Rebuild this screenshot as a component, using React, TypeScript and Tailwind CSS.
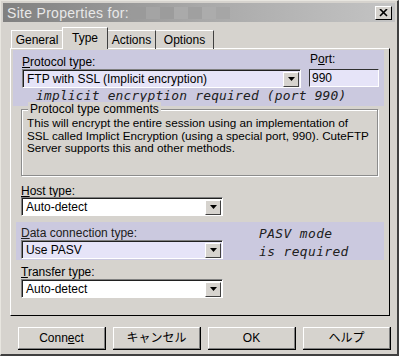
import React from "react";

const ui = { fontFamily: '"Liberation Sans", "Noto Sans CJK JP", sans-serif' };
const mono = { fontFamily: '"DejaVu Sans Mono", monospace' };

function Arrow() {
  return (
    <div className="w-[16px] h-[15px] bg-[#d6d3ce] border-t border-l border-t-[#ffffff] border-l-[#ffffff] border-b border-r border-b-[#404040] border-r-[#404040] flex items-center justify-center shrink-0">
      <svg width="7" height="4" viewBox="0 0 7 4">
        <polygon points="0,0 7,0 3.5,4" fill="#000" />
      </svg>
    </div>
  );
}

function Combo({ text, w, bg = "bg-white" }: { text: string; w: string; bg?: string }) {
  return (
    <div className={`${w} h-[19px] flex border-t border-l border-t-[#808080] border-l-[#808080] border-b border-r border-b-white border-r-white`}>
      <div className={`flex-1 flex items-center border-t border-l border-t-[#202020] border-l-[#202020] ${bg} pl-[3px] pr-[1px]`}>
        <span className="flex-1 text-[12px] text-black leading-none whitespace-nowrap">{text}</span>
        <Arrow />
      </div>
    </div>
  );
}

function Btn({ label, children }: { label?: string; children?: React.ReactNode }) {
  return (
    <div className="w-[88px] h-[23px] border-r border-b border-r-black border-b-black">
      <div className="w-full h-full border-t border-l border-t-white border-l-white border-r border-b border-r-[#808080] border-b-[#808080] flex items-center justify-center text-[12px] leading-none text-black">
        {children ?? label}
      </div>
    </div>
  );
}

export default function App() {
  return (
    <div className="w-[399px] h-[356px] bg-[#d6d3ce] border-t border-l border-t-[#e8e6e0] border-l-[#e8e6e0] border-r-2 border-b-2 border-r-[#404040] border-b-[#404040] overflow-hidden flex flex-col text-[12px] leading-[14px]" style={ui}>
      {/* title bar */}
      <div className="mx-[2px] mt-[2px] h-[19px] shrink-0 flex items-center bg-gradient-to-r from-[#808080] via-[#a8a8a8] to-[#c4c4c4] pl-[4px] pr-[3px]">
        <span className="text-[14px] leading-none text-[#e8e8e8] tracking-[0.3px]">Site Properties for:</span>
        <div className="ml-[3px] flex">
          <div className="w-[14px] h-[12px] bg-[#9a9a9a]" />
          <div className="w-[14px] h-[12px] bg-[#a4a4a4]" />
          <div className="w-[14px] h-[12px] bg-[#9c9c9c]" />
          <div className="w-[14px] h-[12px] bg-[#aaaaaa]" />
          <div className="w-[14px] h-[12px] bg-[#a0a0a0]" />
          <div className="w-[14px] h-[12px] bg-[#acacac]" />
          <div className="w-[14px] h-[12px] bg-[#a6a6a6]" />
        </div>
        <div className="flex-1" />
        <div className="w-[17px] h-[14px] bg-[#d6d3ce] border-t border-l border-t-white border-l-white border-r border-b border-r-black border-b-black flex items-center justify-center">
          <svg width="9" height="8" viewBox="0 0 9 8">
            <path d="M1 0 L8 7 M8 0 L1 7" stroke="#000" strokeWidth="1.6" />
          </svg>
        </div>
      </div>

      {/* tabs */}
      <div className="ml-[10px] mt-[5px] flex items-end h-[22px] shrink-0 relative z-10">
        <div className="w-[52px] h-[19px] border-t border-l border-t-white border-l-white border-r border-r-[#404040] flex items-center justify-center text-black">General</div>
        <div className="w-[46px] h-[22px] -ml-[1px] bg-[#d6d3ce] border-t border-l border-t-white border-l-white border-r border-r-[#404040] flex items-start justify-center pt-[3px] text-black">Type</div>
        <div className="w-[48px] h-[19px] border-t border-t-white border-r border-r-[#404040] flex items-center justify-center text-black">Actions</div>
        <div className="w-[58px] h-[19px] border-t border-t-white border-r border-r-[#404040] flex items-center justify-center text-black">Options</div>
      </div>

      {/* panel */}
      <div className="ml-[9px] w-[380px] h-[268px] shrink-0 -mt-[1px] border-t border-l border-t-white border-l-white border-r border-b border-r-black border-b-black flex flex-col">
        {/* protocol lavender region */}
        <div className="ml-[2px] mt-[1px] w-[371px] h-[56px] bg-[#cbc9df] flex flex-col shrink-0">
          <div className="flex pl-[9px] pt-[5px]">
            <div className="flex flex-col">
              <span className="text-black h-[13px]"><span className="underline">P</span>rotocol type:</span>
              <div className="mt-[1px]">
                <Combo text="FTP with SSL (Implicit encryption)" w="w-[279px]" bg="bg-[#e6e4f8]" />
              </div>
            </div>
            <div className="flex flex-col ml-[8px] -mt-[3px]">
              <span className="text-black h-[16px] ml-[1px]">P<span className="underline">o</span>rt:</span>
              <div className="mt-[1px] w-[70px] h-[18px] bg-[#e6e4f8] border-t border-l border-t-[#303030] border-l-[#303030] border-b border-r border-b-white border-r-white flex items-center pl-[2px] text-black">990</div>
            </div>
          </div>
          <div className="pl-[23px] mt-[1px] text-[12.9px] leading-[14px] italic text-[#202020] whitespace-nowrap tracking-[0.2px]" style={mono}>
            implicit encryption required (port 990)
          </div>
        </div>

        {/* groupbox */}
        <div className="ml-[10px] mt-[3px] w-[357px] h-[67px] shrink-0 border border-[#8c8c8c] shadow-[inset_1px_1px_0_#ffffff,1px_1px_0_#ffffff] relative">
          <span className="absolute -top-[8px] left-[6px] px-[2px] bg-[#d6d3ce] text-black whitespace-nowrap">Protocol type comments</span>
          <div className="pl-[5px] pt-[7px] text-[11.7px] leading-[12.5px] text-black whitespace-nowrap">
            This will encrypt the entire session using an implementation of<br />
            SSL called Implict Encryption (using a special port, 990). CuteFTP<br />
            Server supports this and other methods.
          </div>
        </div>

        {/* host type */}
        <div className="ml-[10px] mt-[8px] flex flex-col shrink-0">
          <span className="text-black h-[13px]"><span className="underline">H</span>ost type:</span>
          <Combo text="Auto-detect" w="w-[202px]" />
        </div>

        {/* data connection lavender region */}
        <div className="ml-[5px] mt-[6px] w-[368px] h-[38px] shrink-0 bg-[#cbc9df] flex">
          <div className="pl-[5px] pt-[4px] flex flex-col">
            <span className="text-[#202020] h-[14px]"><span className="underline">D</span>ata connection type:</span>
            <Combo text="Use PASV" w="w-[202px]" bg="bg-[#e6e4f8]" />
          </div>
          <div className="ml-[36px] pt-[3px] text-[12.9px] leading-[18px] italic text-[#202020] tracking-[0.4px]" style={mono}>
            PASV mode<br />is required
          </div>
        </div>

        {/* transfer type */}
        <div className="ml-[10px] mt-[5px] flex flex-col shrink-0">
          <span className="text-black h-[14px]"><span className="underline">T</span>ransfer type:</span>
          <Combo text="Auto-detect" w="w-[202px]" />
        </div>
      </div>

      {/* buttons */}
      <div className="mt-[11px] ml-[17px] flex gap-[7px] shrink-0">
        <Btn>Conn<span className="underline">e</span>ct</Btn>
        <Btn label="キャンセル" />
        <Btn label="OK" />
        <Btn label="ヘルプ" />
      </div>
    </div>
  );
}
